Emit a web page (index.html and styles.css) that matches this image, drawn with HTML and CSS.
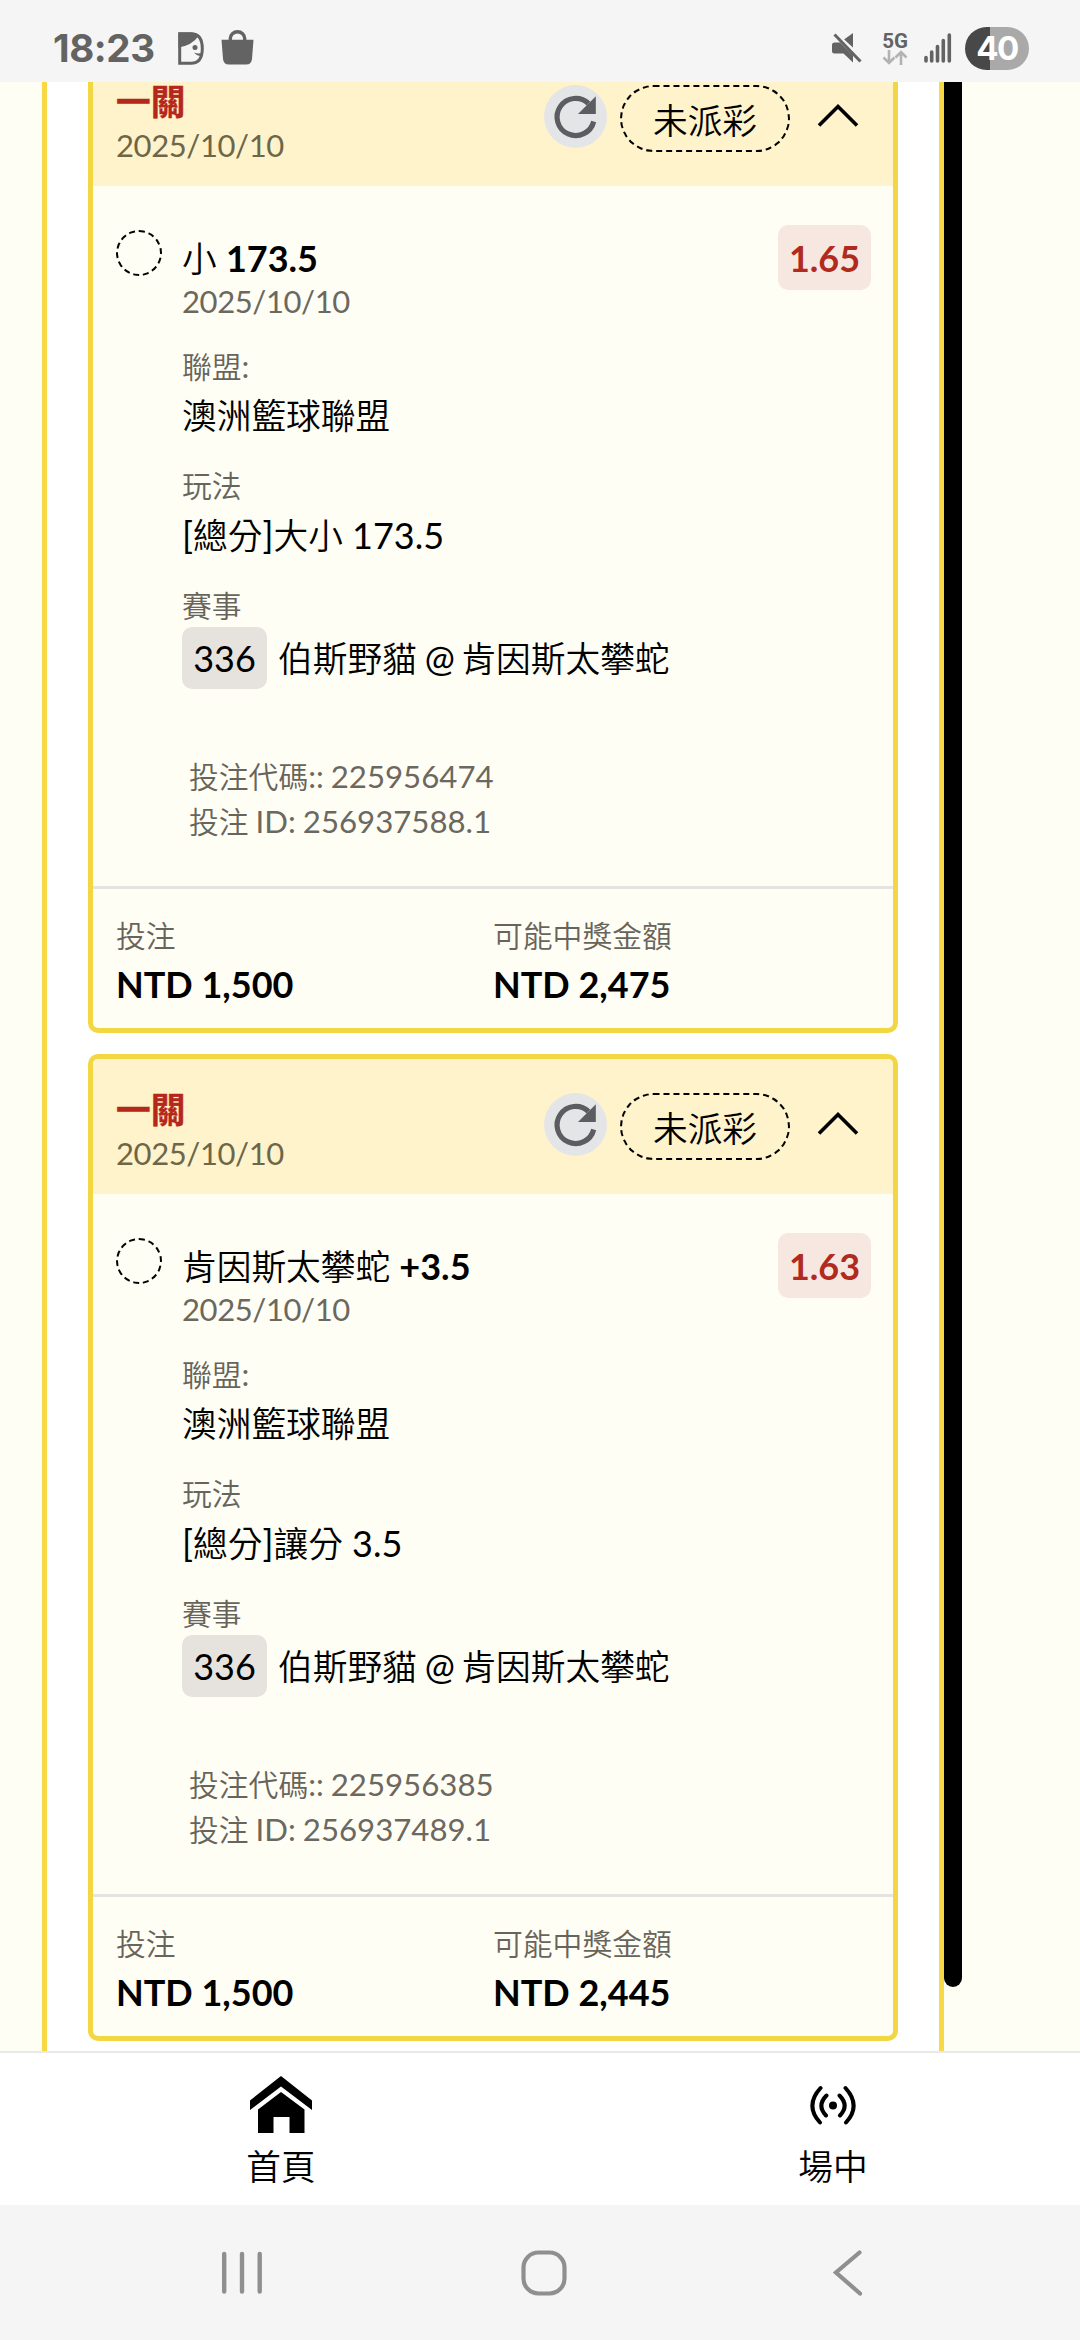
FILE: index.html
```
<!DOCTYPE html>
<html lang="zh-Hant">
<head>
<meta charset="utf-8">
<title>投注紀錄</title>
<link rel="stylesheet" href="styles.css">
</head>
<body>
<svg width="0" height="0" class="defs">
  <symbol id="refresh" viewBox="0 0 63 63">
    <path d="M49.700 36.500A18.600 18.600 0 1 1 44.500 18.500" fill="none" stroke="#5c5d60" stroke-width="5.200"/>
    <path d="M51.800 11.300V29H34z" fill="#5c5d60"/>
  </symbol>
</svg>
<div class="screen">
  <header class="status">
    <span class="clock">18:23</span>
    <svg class="ic-face" viewBox="0 0 27 33" width="27" height="33">
      <path d="M1.700 1.700H13Q24.300 1.700 24.300 16.500Q24.300 31.300 13 31.300H1.700Z" fill="none" stroke="#636363" stroke-width="3"/>
      <path d="M.500.500H13Q18 .500 21 3.500Q14 13.500 .500 15.500Z" fill="#636363"/>
      <circle cx="17" cy="15.500" r="2.500" fill="#636363"/>
      <path d="M16 20.500Q19 24.500 25 24V20.500Q20 22.500 16 20.500Z" fill="#636363"/>
    </svg>
    <svg class="ic-bag" viewBox="0 0 33 35" width="33" height="35">
      <path d="M.500 9.800H32.500L31 29Q30.500 34.500 25 34.500H8Q2.500 34.500 2 29Z" fill="#636363"/>
      <path d="M9.300 11V8.500A7.200 6.800 0 0 1 23.700 8.500V11" fill="none" stroke="#636363" stroke-width="3.400"/>
    </svg>
    <div class="status-right">
      <svg class="ic-mute" viewBox="0 0 30 30" width="30" height="30">
        <path d="M0 12Q0 9.500 2.500 9.500H8L21 22.500V29.500L11.500 20.500H2.500Q0 20.500 0 18Z M12 6.500L21 0V14.500Z" fill="#636363"/>
        <path d="M4.500 0L30 26.500" stroke="#f5f5f5" stroke-width="2"/>
        <path d="M2.500 1.500L28.500 28.500" stroke="#636363" stroke-width="3"/>
      </svg>
      <div class="net">
        <span class="net-label">5G</span>
        <svg viewBox="0 0 26 15" width="26" height="15">
          <path d="M7 0V13M1.500 7.500L7 13L12.500 7.500M19 15V2M13.500 7.500L19 2L24.500 7.500" fill="none" stroke="#b2b2b2" stroke-width="2.600"/>
        </svg>
      </div>
      <svg class="ic-bars" viewBox="0 0 28 30" width="28" height="30">
        <path d="M2 24.500V28M7.700 19V28M13.500 13.500V28M19.300 7.500V28M25.300 2V28" stroke="#636363" stroke-width="3.600" stroke-linecap="round"/>
      </svg>
      <span class="battery">40</span>
    </div>
  </header>

  <main class="page">
    <div class="list">
      <article class="card">
        <div class="head">
          <div class="head-title"><b class="kind">一關</b><span class="date">2025/10/10</span></div>
          <svg class="refresh"><use href="#refresh"/></svg>
          <span class="pill">未派彩</span>
          <svg class="chev" viewBox="0 0 42 25" width="42" height="25"><path d="M2 22.500L21 3.500L40 22.500" fill="none" stroke="#000" stroke-width="3.600"/></svg>
        </div>
        <div class="body">
          <i class="ring"></i>
          <div class="info">
            <div class="pick"><span>小</span> <b>173.5</b></div>
            <div class="date">2025/10/10</div>
            <div class="label">聯盟<span class="lt">:</span></div>
            <div class="value">澳洲籃球聯盟</div>
            <div class="label">玩法</div>
            <div class="value"><span class="lt">[</span>總分<span class="lt">]</span>大小<span class="lt"> 173.5</span></div>
            <div class="label">賽事</div>
            <div class="match"><span class="no">336</span><span class="teams">伯斯野貓<span class="lt"> @ </span>肯因斯太攀蛇</span></div>
            <div class="codes">
              <div>投注代碼<span class="lt">:: 225956474</span></div>
              <div>投注<span class="lt"> ID: 256937588.1</span></div>
            </div>
          </div>
          <span class="odds">1.65</span>
        </div>
        <div class="foot">
          <div><span class="foot-label">投注</span><b>NTD 1,500</b></div>
          <div><span class="foot-label">可能中獎金額</span><b>NTD 2,475</b></div>
        </div>
      </article>

      <article class="card">
        <div class="head">
          <div class="head-title"><b class="kind">一關</b><span class="date">2025/10/10</span></div>
          <svg class="refresh"><use href="#refresh"/></svg>
          <span class="pill">未派彩</span>
          <svg class="chev" viewBox="0 0 42 25" width="42" height="25"><path d="M2 22.500L21 3.500L40 22.500" fill="none" stroke="#000" stroke-width="3.600"/></svg>
        </div>
        <div class="body">
          <i class="ring"></i>
          <div class="info">
            <div class="pick"><span>肯因斯太攀蛇</span> <b>+3.5</b></div>
            <div class="date">2025/10/10</div>
            <div class="label">聯盟<span class="lt">:</span></div>
            <div class="value">澳洲籃球聯盟</div>
            <div class="label">玩法</div>
            <div class="value"><span class="lt">[</span>總分<span class="lt">]</span>讓分<span class="lt"> 3.5</span></div>
            <div class="label">賽事</div>
            <div class="match"><span class="no">336</span><span class="teams">伯斯野貓<span class="lt"> @ </span>肯因斯太攀蛇</span></div>
            <div class="codes">
              <div>投注代碼<span class="lt">:: 225956385</span></div>
              <div>投注<span class="lt"> ID: 256937489.1</span></div>
            </div>
          </div>
          <span class="odds">1.63</span>
        </div>
        <div class="foot">
          <div><span class="foot-label">投注</span><b>NTD 1,500</b></div>
          <div><span class="foot-label">可能中獎金額</span><b>NTD 2,445</b></div>
        </div>
      </article>
    </div>
    <div class="scroll"></div>
  </main>

  <nav class="tabs">
    <a class="tab">
      <svg viewBox="0 0 62 57" width="62" height="57"><path d="M31 0L62 24.500V34L31 10.500L0 34V24.500Z M31 16L54.500 33.500V57H39.500V41H23.500V57H8V33.500Z"/></svg>
      <span>首頁</span>
    </a>
    <a class="tab">
      <svg viewBox="0 0 62 57" width="62" height="57"><circle cx="31" cy="29.500" r="4"/><path d="M18.500 12Q2.500 29.500 18 46.500M43.500 12Q59.500 29.500 44 46.500M24.500 19.500Q14.500 29.500 24 39.500M37.500 19.500Q47.500 29.500 38 39.500" fill="none" stroke="#000" stroke-width="4" stroke-linecap="round"/></svg>
      <span>場中</span>
    </a>
  </nav>

  <footer class="sysnav">
    <svg viewBox="0 0 42 46" width="42" height="46"><path d="M3.200 4V41.500M21 4V41.500M38.700 4V41.500" stroke="#8f8f8f" stroke-width="4.400" stroke-linecap="round"/></svg>
    <svg viewBox="0 0 46 46" width="46" height="46"><rect x="2.500" y="2.500" width="41" height="41" rx="15" fill="none" stroke="#8f8f8f" stroke-width="4.200"/></svg>
    <svg viewBox="0 0 30 46" width="30" height="46"><path d="M26.500 2.500L3 22.500L27 43.500" fill="none" stroke="#8f8f8f" stroke-width="4.200" stroke-linecap="round"/></svg>
  </footer>
</div>
</body>
</html>
```

FILE: styles.css
```
* { box-sizing: border-box; }
body {
  margin: 0;
  font-family: Lato, "Noto Sans CJK TC", sans-serif;
  color: #000;
}
.defs { position: absolute; }
.screen {
  width: 1080px;
  height: 2340px;
  display: flex;
  flex-direction: column;
  overflow: hidden;
  background: #fffef5;
}

/* status bar */
.status {
  flex: none;
  height: 82px;
  padding: 14px 51px 0 53px;
  display: flex;
  align-items: center;
  background: #f5f5f5;
}
.clock {
  width: 125px;
  font: 700 38.500px/48px Inter, sans-serif;
  letter-spacing: -0.4px;
  color: #636363;
}
.ic-bag { margin-left: 16px; margin-top: -2px; }
.status-right { margin-left: auto; display: flex; align-items: center; }
.net { margin: 0 16px 0 20px; width: 26px; display: flex; flex-direction: column; align-items: center; }
.net-label { font: 700 20.500px/18px Roboto, sans-serif; color: #636363; }
.battery {
  margin-left: 13px;
  width: 64px;
  height: 43px;
  border-radius: 22px;
  background: linear-gradient(90deg, #484848 25.500px, #a9a9a9 25.500px);
  color: #fff;
  font: 700 33px/43px Inter, sans-serif;
  letter-spacing: -1.500px;
  text-align: center;
}

/* scrolled page area */
.page {
  flex: none;
  height: 1969px;
  display: flex;
  padding-left: 42px;
  overflow: hidden;
}
.list {
  width: 902px;
  padding: 0 41px;
  border: solid #f7d946;
  border-width: 0 5px;
  background: #fff;
  display: flex;
  flex-direction: column;
  gap: 21px;
}
.card:first-child { margin-top: -36px; }
.card {
  flex: none;
  height: 987px;
  border: 5px solid #f3d742;
  border-radius: 10px;
  background: #fffef5;
  overflow: hidden;
}
.scroll {
  width: 17.500px;
  height: 1905px;
  background: #000;
  border-radius: 0 0 9px 9px;
}

.head {
  height: 135px;
  padding: 0 34px 0 23px;
  display: flex;
  align-items: flex-start;
  background: #fff3cc;
}
.head-title { flex: 1; padding-top: 29px; }
.kind { display: block; font-size: 34.700px; line-height: 44px; color: #b5271b; -webkit-text-stroke: 0.4px #b5271b; }
.date { display: block; font-size: 31px; line-height: 40px; letter-spacing: -0.4px; color: #6b685f; }
.head .date { line-height: 42px; color: #6e6648; }
.refresh { width: 63px; height: 63px; margin-top: 34px; border-radius: 50%; background: #e4e5e7; }
.pill {
  margin: 34px 27px 0 13px;
  width: 170px;
  height: 67px;
  border: 2px dashed #000;
  border-radius: 34px;
  font-size: 34.700px;
  font-weight: 350;
  line-height: 67px;
  text-align: center;
}
.chev { margin-top: 52px; }

.body {
  height: 700px;
  padding: 39px 22px 0 23px;
  display: flex;
  align-items: flex-start;
}
.ring { width: 46px; height: 46px; margin-top: 5px; border: 2px dashed #000; border-radius: 50%; }
.info { flex: 1; margin-left: 20px; }
.pick { font-size: 36px; line-height: 44px; margin-top: 11px; }
.pick span { font-size: 34.700px; font-weight: 350; }
.label { font-size: 29.800px; font-weight: 350; line-height: 40px; margin-top: 25px; color: #67645b; }
.label .lt, .codes .lt { font-size: 31.200px; color: #6b685f; }
.value { font-size: 34.700px; font-weight: 350; line-height: 50px; margin-top: 4px; }
.lt { font-size: 36px; font-weight: 400; white-space: pre; }
.match { margin-top: -1px; display: flex; align-items: center; gap: 11px; font-size: 34.700px; line-height: 62px; }
.teams { font-weight: 350; padding-top: 2px; }
.teams .lt { letter-spacing: -1.300px; }
.no { width: 85px; height: 62px; border-radius: 10px; background: #e6e3de; font-size: 36px; text-align: center; }
.codes { padding: 64px 0 0 7px; font-size: 29.800px; font-weight: 350; line-height: 45px; color: #67645b; word-spacing: -1px; }
.odds {
  width: 93px;
  height: 65px;
  border-radius: 10px;
  background: #f7e7e1;
  color: #b02a1d;
  font-weight: 700;
  font-size: 36px;
  line-height: 66px;
  text-align: center;
}

.foot {
  height: 142px;
  padding: 26px 23px 0 23px;
  display: grid;
  grid-template-columns: 1fr 1fr;
  border-top: 3px solid #e6e4df;
}
.foot-label { display: block; font-size: 29.800px; font-weight: 350; line-height: 42px; color: #67645b; }
.foot b { display: block; font-size: 36px; line-height: 50px; margin-top: 2px; }

/* app tabs */
.tabs {
  flex: none;
  height: 154px;
  padding: 23px 0 0 5px;
  border-top: 2px solid #e9e9e9;
  background: #fff;
  display: grid;
  grid-template-columns: 552px 552px;
}
.tab { display: flex; flex-direction: column; align-items: center; }
.tab span { font-size: 34.700px; font-weight: 350; line-height: 50px; margin-top: 9px; }

/* system navigation */
.sysnav {
  flex: 1;
  padding: 45px 0 0 221px;
  display: grid;
  grid-template-columns: 300px 312px 30px;
  align-items: start;
  align-content: start;
  background: #f5f5f5;
}
```
